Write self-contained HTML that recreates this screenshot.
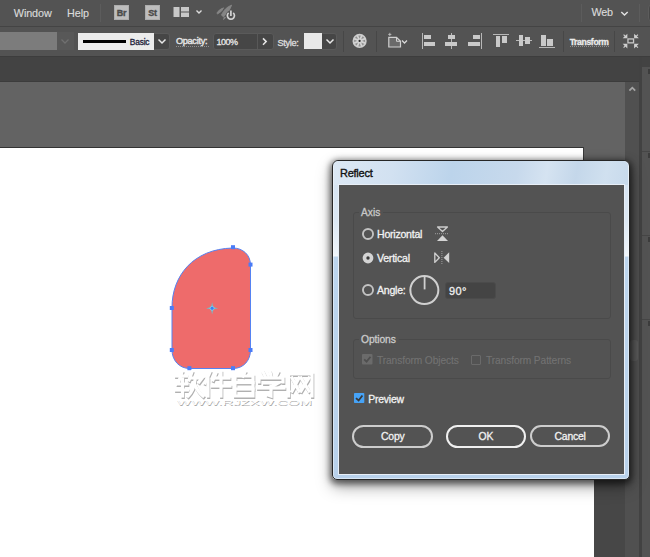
<!DOCTYPE html>
<html><head><meta charset="utf-8"><style>
html,body{margin:0;padding:0;}
body{width:650px;height:557px;overflow:hidden;position:relative;background:#535353;font-family:"Liberation Sans", sans-serif;}
body>div,body>svg{position:absolute;}
.t{white-space:nowrap;line-height:1;}
</style></head><body>
<div style="left:0px;top:0px;width:650px;height:25px;background:#535353"></div>
<div style="left:0px;top:26px;width:650px;height:1px;background:#444444"></div>
<div class="t" style="left:13.8px;top:8.06px;font-size:10.8px;color:#dadada;-webkit-text-stroke:0.15px #dadada;letter-spacing:-0.1px">Window</div>
<div class="t" style="left:66.9px;top:8.06px;font-size:10.8px;color:#dadada;-webkit-text-stroke:0.15px #dadada;">Help</div>
<div style="left:100px;top:4px;width:1px;height:18px;background:#5c5c5c"></div>
<div style="left:114px;top:5px;width:15px;height:15px;background:#bdbdbd;color:#4a4a4a;font:bold 9px/16px 'Liberation Sans', sans-serif;text-align:center;letter-spacing:-0.2px;box-shadow:inset 0 0 0 1px #adadad;-webkit-text-stroke:0.35px #4a4a4a">Br</div>
<div style="left:145px;top:5px;width:15px;height:15px;background:#bdbdbd;color:#4a4a4a;font:bold 9px/16px 'Liberation Sans', sans-serif;text-align:center;letter-spacing:-0.2px;box-shadow:inset 0 0 0 1px #adadad;-webkit-text-stroke:0.35px #4a4a4a">St</div>
<svg style="left:173px;top:6px" width="32" height="12" viewBox="0 0 32 12">
<rect x="0.5" y="1" width="6" height="10" fill="#c8c8c8"/>
<rect x="8" y="1" width="8" height="4.5" fill="#c8c8c8"/>
<rect x="8" y="6.5" width="8" height="4.5" fill="#c8c8c8"/>
<path d="M23.5 4.5 L26 7 L28.5 4.5" stroke="#dcdcdc" stroke-width="1.4" fill="none"/>
</svg>
<svg style="left:214px;top:2px" width="24" height="20" viewBox="0 0 24 20">
<path d="M2.8 11.2 Q5 7.2 9.6 5.8 Q8.2 9.8 3.6 11.9 Z" fill="#858585" stroke="#858585" stroke-width="0.8" stroke-linejoin="round"/>
<path d="M7.4 12.9 Q11 5.5 17.7 3.1 Q15.8 10 9.4 14.9 Z" fill="#858585" stroke="#858585" stroke-width="0.8" stroke-linejoin="round"/>
<path d="M9.6 17.6 L10.2 15 L11.8 15.4 Z" fill="#858585" stroke="#858585" stroke-width="0.8"/>
<circle cx="16.9" cy="13.8" r="5.2" fill="#535353"/>
<path d="M14.6 10.9 A3.55 3.55 0 1 0 19.2 10.9" stroke="#d4d4d4" stroke-width="1.7" fill="none"/>
<path d="M16.9 8.6 V14.1" stroke="#d4d4d4" stroke-width="1.7"/>
</svg>
<div style="left:581px;top:4px;width:1px;height:18px;background:#5c5c5c"></div>
<div class="t" style="left:591.5px;top:7.16px;font-size:10.8px;color:#dadada;-webkit-text-stroke:0.15px #dadada;letter-spacing:-0.2px">Web</div>
<svg style="left:620px;top:10px" width="9" height="7" viewBox="0 0 9 7"><path d="M1.3 2 L4.5 5 L7.7 2" stroke="#e0e0e0" stroke-width="1.5" fill="none"/></svg>
<div style="left:639px;top:4px;width:1px;height:18px;background:#5c5c5c"></div>
<div style="left:647.5px;top:4px;width:12px;height:18px;border:1px solid #5c5c5c;border-radius:4px;background:#474747;box-sizing:border-box"></div>
<div style="left:0px;top:27px;width:650px;height:29px;background:#535353"></div>
<div style="left:0px;top:56px;width:650px;height:1px;background:#3d3d3d"></div>
<div style="left:0px;top:32px;width:57px;height:18px;background:#7c7c7c"></div>
<div style="left:57px;top:32px;width:17px;height:18px;background:#585858"></div>
<svg style="left:60px;top:38px" width="10" height="7" viewBox="0 0 10 7"><path d="M1.5 1.5 L5 5 L8.5 1.5" stroke="#707070" stroke-width="1.3" fill="none"/></svg>
<div style="left:78px;top:33px;width:76px;height:17px;background:#ebebeb"></div>
<div style="left:83px;top:39.8px;width:42.5px;height:2.8px;background:#000"></div>
<div class="t" style="left:129.8px;top:38.19px;font-size:8.4px;color:#1c1c3a;-webkit-text-stroke:0.3px #1c1c3a;letter-spacing:-0.2px">Basic</div>
<div style="left:154px;top:32.5px;width:15.5px;height:17px;background:#464646;border:1px solid #5a5a5a;border-left:none;box-sizing:border-box;border-radius:0 3px 3px 0"></div>
<svg style="left:157px;top:38px" width="10" height="7" viewBox="0 0 10 7"><path d="M1.5 1.5 L5 5 L8.5 1.5" stroke="#e8e8e8" stroke-width="1.5" fill="none"/></svg>
<div class="t" style="left:175.9px;top:37.41px;font-size:9.2px;color:#e6e6e6;-webkit-text-stroke:0.4px #e6e6e6;letter-spacing:-0.3px">Opacity:</div>
<svg style="left:176px;top:46px" width="34" height="1"><line x1="0" y1="0.5" x2="34" y2="0.5" stroke="#909090" stroke-width="1" stroke-dasharray="1 1"/></svg>
<div style="left:212.5px;top:32.5px;width:61px;height:17px;background:#464646;border:1px solid #5a5a5a;box-sizing:border-box;border-radius:3px"></div>
<div style="left:257px;top:33px;width:1px;height:16px;background:#585858"></div>
<div class="t" style="left:216.5px;top:37.58px;font-size:9px;color:#e6e6e6;-webkit-text-stroke:0.3px #e6e6e6;letter-spacing:-0.5px">100%</div>
<svg style="left:261px;top:37px" width="7" height="10" viewBox="0 0 7 10"><path d="M2 1.4 L5.2 4.6 L2 7.8" stroke="#e8e8e8" stroke-width="1.5" fill="none"/></svg>
<div class="t" style="left:277.4px;top:38.51px;font-size:9.2px;color:#dcdcdc;-webkit-text-stroke:0.35px #dcdcdc;letter-spacing:-0.3px">Style:</div>
<div style="left:304.4px;top:33.4px;width:17.2px;height:16px;background:#e8e8e8"></div>
<div style="left:321.6px;top:32.5px;width:15.4px;height:17px;background:#464646;border:1px solid #5a5a5a;border-left:none;box-sizing:border-box;border-radius:0 3px 3px 0"></div>
<svg style="left:324.5px;top:38px" width="10" height="7" viewBox="0 0 10 7"><path d="M1.5 1.5 L5 5 L8.5 1.5" stroke="#e8e8e8" stroke-width="1.5" fill="none"/></svg>
<div style="left:343px;top:31px;width:1px;height:21px;background:#474747"></div>
<svg style="left:351px;top:32px" width="18" height="18" viewBox="0 0 18 18">
<circle cx="8.6" cy="8.9" r="7.1" fill="#cdcdcd"/>
<circle cx="8.6" cy="8.9" r="5.5" fill="#909090"/>
<g stroke="#d4d4d4" stroke-width="1.7" transform="rotate(22.5 8.6 8.9)">
<line x1="8.6" y1="3" x2="8.6" y2="14.8"/><line x1="2.7" y1="8.9" x2="14.5" y2="8.9"/>
<line x1="4.43" y1="4.73" x2="12.77" y2="13.07"/><line x1="12.77" y1="4.73" x2="4.43" y2="13.07"/>
</g>
<circle cx="8.6" cy="8.9" r="2.2" fill="#d4d4d4"/>
<circle cx="8.6" cy="8.9" r="1.1" fill="#2e2e2e"/>
</svg>
<div style="left:376px;top:31px;width:1px;height:21px;background:#474747"></div>
<svg style="left:384px;top:32px" width="26" height="18" viewBox="0 0 26 18">
<path d="M4.8 5.3 H12.5 L16.5 9.3 V15 H4.8 Z" fill="#6a6a6a" stroke="#d0d0d0" stroke-width="1.2"/>
<path d="M12.5 5.3 V9.3 H16.5" fill="none" stroke="#d0d0d0" stroke-width="1"/>
<path d="M5.8 0.8 V4 M4.2 2.4 H7.4" stroke="#c8c8c8" stroke-width="0.8"/>
<path d="M18 8.5 L20.5 11 L23 8.5" stroke="#d8d8d8" stroke-width="1.3" fill="none"/>
</svg>
<div style="left:422.3px;top:33.2px;width:1px;height:15.6px;background:#b8b8b8"></div>
<div style="left:424.2px;top:34.6px;width:6.8px;height:4.9px;background:#c9c9c9"></div>
<div style="left:424.2px;top:41.8px;width:11.1px;height:4.5px;background:#c9c9c9"></div>
<div style="left:451px;top:33.2px;width:1px;height:15.6px;background:#b8b8b8"></div>
<div style="left:447.6px;top:34.6px;width:7.4px;height:4.9px;background:#c9c9c9"></div>
<div style="left:445.2px;top:41.8px;width:12.3px;height:4.5px;background:#c9c9c9"></div>
<div style="left:481px;top:33.2px;width:1px;height:15.6px;background:#b8b8b8"></div>
<div style="left:472.8px;top:34.6px;width:7.4px;height:4.9px;background:#c9c9c9"></div>
<div style="left:468px;top:41.8px;width:12.3px;height:4.5px;background:#c9c9c9"></div>
<div style="left:493.4px;top:34px;width:15.6px;height:1px;background:#b8b8b8"></div>
<div style="left:496px;top:35.8px;width:4.4px;height:11.1px;background:#c9c9c9"></div>
<div style="left:502.2px;top:35.8px;width:5.2px;height:6.8px;background:#c9c9c9"></div>
<div style="left:516px;top:40px;width:15.8px;height:1px;background:#b8b8b8"></div>
<div style="left:518.8px;top:34.9px;width:4.1px;height:11.1px;background:#c9c9c9"></div>
<div style="left:525px;top:36.8px;width:5px;height:7.4px;background:#c9c9c9"></div>
<div style="left:538.5px;top:47.2px;width:16px;height:1px;background:#b8b8b8"></div>
<div style="left:541.4px;top:34.9px;width:4.2px;height:11.1px;background:#c9c9c9"></div>
<div style="left:547.2px;top:38.9px;width:5.5px;height:7.1px;background:#c9c9c9"></div>
<div style="left:563px;top:31px;width:1px;height:21px;background:#474747"></div>
<div class="t" style="left:569.7px;top:37.52px;font-size:8.6px;color:#ececec;-webkit-text-stroke:0.3px #ececec;font-weight:bold;letter-spacing:-0.35px">Transform</div>
<svg style="left:570px;top:46px" width="39" height="1"><line x1="0" y1="0.5" x2="39" y2="0.5" stroke="#8e8e8e" stroke-width="1" stroke-dasharray="1 1"/></svg>
<div style="left:614px;top:31px;width:1px;height:21px;background:#474747"></div>
<svg style="left:622px;top:33px" width="18" height="16" viewBox="0 0 18 16">
<rect x="5.95" y="5.95" width="5.6" height="3.9" fill="none" stroke="#c8c8c8" stroke-width="1.3"/>
<g fill="#d0d0d0" stroke="#d0d0d0" stroke-width="1.1">
<path d="M1.6 1.6 L3.6 3.6" /><path d="M4.8 4.8 L4.8 2 L2 4.8 Z"/>
<path d="M15.9 1.6 L13.9 3.6" /><path d="M12.7 4.8 L12.7 2 L15.5 4.8 Z"/>
<path d="M1.6 14.6 L3.6 12.6" /><path d="M4.8 11.4 L4.8 14.2 L2 11.4 Z"/>
<path d="M15.9 14.6 L13.9 12.6" /><path d="M12.7 11.4 L12.7 14.2 L15.5 11.4 Z"/>
</g></svg>
<div style="left:0px;top:57px;width:650px;height:25px;background:#434343"></div>
<div style="left:0px;top:81px;width:639px;height:1px;background:#3c3c3c"></div>
<div style="left:0px;top:82px;width:625px;height:475px;background:#636363"></div>
<div style="left:0px;top:147px;width:583px;height:410px;background:#fff"></div>
<div style="left:0px;top:147px;width:583px;height:1px;background:#333"></div>
<div style="left:583px;top:147px;width:1px;height:333px;background:#3a3a3a"></div>
<div style="left:583px;top:480px;width:11px;height:77px;background:#fff"></div>
<div style="left:594px;top:480px;width:31px;height:77px;background:#474747"></div>
<div style="left:625px;top:82px;width:14px;height:475px;background:#505050"></div>
<svg style="left:628px;top:86px" width="9" height="6" viewBox="0 0 9 6"><path d="M1.4 4.6 L4.3 1.7 L7.2 4.6" stroke="#a4a4a4" stroke-width="1.8" fill="none"/></svg>
<div style="left:630px;top:340px;width:8px;height:21px;background:#5a5a5a;border-radius:3px"></div>
<div style="left:639px;top:57px;width:3px;height:500px;background:#424242"></div>
<div style="left:642px;top:67px;width:8px;height:490px;background:#535353"></div>
<div style="left:642px;top:151px;width:8px;height:1px;background:#464646"></div>
<div style="left:642px;top:235px;width:8px;height:1px;background:#464646"></div>
<div style="left:642px;top:319px;width:8px;height:1px;background:#464646"></div>
<div style="left:648px;top:69px;width:2px;height:5px;background:#3c3c3c"></div>
<div style="left:648px;top:153px;width:2px;height:5px;background:#3c3c3c"></div>
<div style="left:648px;top:237px;width:2px;height:5px;background:#3c3c3c"></div>
<div style="left:648px;top:321px;width:2px;height:5px;background:#3c3c3c"></div>
<svg style="left:0;top:0" width="650" height="557" viewBox="0 0 650 557">
<path d="M232.7 248 C243 248 250.5 255 250.5 264.9 L250.5 350 C250.5 360 244 368.5 233 368.5 L189.6 368.5 C179 368.5 172 360 172 350 L172 307.5 C172 276 193 249 232.7 248 Z" fill="#ee6b6b" stroke="#5582f2" stroke-width="1"/>
<g fill="#4a7cf7">
<rect x="231" y="245.2" width="4" height="4"/><rect x="248.5" y="262.6" width="4" height="4"/>
<rect x="169.8" y="306" width="4" height="4"/><rect x="169.8" y="348" width="4" height="4"/>
<rect x="248.5" y="348" width="4" height="4"/><rect x="187.4" y="366.2" width="4" height="4"/>
<rect x="231" y="366.2" width="4" height="4"/>
</g>
<path d="M212.1 302.2 L213.1 307.3 L218.2 308.3 L213.1 309.3 L212.1 314.4 L211.1 309.3 L206 308.3 L211.1 307.3 Z" fill="#62c6d6"/>
<circle cx="212.1" cy="308.3" r="2" fill="#3d7ef2" stroke="#8fd8e8" stroke-width="0.7"/>
</svg>
<svg style="left:0;top:0" width="650" height="557" viewBox="0 0 650 557"><g stroke="#b0b0b0" stroke-width="3.2" fill="none" stroke-linecap="square"><g transform="translate(176.7,373.4)"><path d="M0 4H11"/><path d="M6 0L2 12H11"/><path d="M6.5 7V24"/><path d="M0 18H12"/><path d="M16 0L13 8"/><path d="M14 6H26L23 10"/><path d="M19 8Q18 18 12 24"/><path d="M19 13Q22 20 27 24"/></g><g transform="translate(204.7,373.4)"><path d="M6 0L1 11"/><path d="M4 7V24"/><path d="M12 1L9 8"/><path d="M10 6H25"/><path d="M8 14H26"/><path d="M17 0V24"/></g><g transform="translate(232.7,373.4)"><path d="M13 0L11 4"/><path d="M3 4H21V24H3Z"/><path d="M3 10.5H21"/><path d="M3 17H21"/></g><g transform="translate(258.7,373.4)"><path d="M5 0L7 4"/><path d="M12 0L13 4"/><path d="M20 0L18 4"/><path d="M1 10V6H25V10"/><path d="M6 11H20L13 15"/><path d="M0 16H26"/><path d="M13 14V24L10 23"/></g><g transform="translate(287.7,373.4)"><path d="M1.5 24V2H25V24"/><path d="M5 6L12 19M12 6L5 19"/><path d="M14 6L22 19M22 6L14 19"/></g></g><g stroke="#ffffff" stroke-width="3.2" fill="none" stroke-linecap="square"><g transform="translate(176,372)"><path d="M0 4H11"/><path d="M6 0L2 12H11"/><path d="M6.5 7V24"/><path d="M0 18H12"/><path d="M16 0L13 8"/><path d="M14 6H26L23 10"/><path d="M19 8Q18 18 12 24"/><path d="M19 13Q22 20 27 24"/></g><g transform="translate(204,372)"><path d="M6 0L1 11"/><path d="M4 7V24"/><path d="M12 1L9 8"/><path d="M10 6H25"/><path d="M8 14H26"/><path d="M17 0V24"/></g><g transform="translate(232,372)"><path d="M13 0L11 4"/><path d="M3 4H21V24H3Z"/><path d="M3 10.5H21"/><path d="M3 17H21"/></g><g transform="translate(258,372)"><path d="M5 0L7 4"/><path d="M12 0L13 4"/><path d="M20 0L18 4"/><path d="M1 10V6H25V10"/><path d="M6 11H20L13 15"/><path d="M0 16H26"/><path d="M13 14V24L10 23"/></g><g transform="translate(287,372)"><path d="M1.5 24V2H25V24"/><path d="M5 6L12 19M12 6L5 19"/><path d="M14 6L22 19M22 6L14 19"/></g></g><text x="177.6" y="406.4" fill="#a8a8a8" font-family="Liberation Sans" font-size="7.8" textLength="135" lengthAdjust="spacingAndGlyphs">WWW.RJZXW.COM</text><text x="177" y="405.2" fill="#ffffff" font-family="Liberation Sans" font-size="7.8" textLength="135" lengthAdjust="spacingAndGlyphs">WWW.RJZXW.COM</text></svg>
<div style="left:332px;top:160px;width:298px;height:320px;box-sizing:border-box;border:1px solid #262626;border-radius:6px 6px 5px 5px;background:linear-gradient(to bottom,#d3e2f1 0px,#dce8f4 60px,#eef4fa 92px,#f4f8fc 95px,#bcd5ee 96px,#b8d1eb 100%);box-shadow:inset 0 0 0 1px rgba(255,255,255,0.45),0 2px 6px 2px rgba(0,0,0,0.55),0 7px 16px 0 rgba(0,0,0,0.35)"></div>
<div style="left:334px;top:161px;width:294px;height:24px;border-radius:5px 5px 0 0;background:linear-gradient(100deg,#dce8f4 0%,#d2e1f1 20%,#bcd4eb 40%,#c7d9ec 62%,#d5e3f1 72%,#c4d7ea 82%,#d0e0ef 92%,#c8daec 100%)"></div>
<div style="left:339px;top:185px;width:285px;height:289px;background:#535353;outline:1px solid #e8eff7"></div>
<div class="t" style="left:340px;top:168.09px;font-size:11px;color:#111;-webkit-text-stroke:0.35px #111;letter-spacing:-0.25px">Reflect</div>
<div style="left:353px;top:211.6px;width:257.5px;height:107.4px;border:1px solid #4a4a4a;border-radius:3px;box-sizing:border-box"></div>
<div style="left:359px;top:205px;width:24px;height:10px;background:#535353"></div>
<div class="t" style="left:361px;top:207.97px;font-size:10.2px;color:#c8c8c8;-webkit-text-stroke:0.3px #c8c8c8;">Axis</div>
<svg style="left:360.8px;top:226.5px" width="14" height="14" viewBox="0 0 14 14"><circle cx="7" cy="7" r="5.05" fill="none" stroke="#c2c2c2" stroke-width="1.9"/></svg>
<svg style="left:360.8px;top:251px" width="14" height="14" viewBox="0 0 14 14"><circle cx="7" cy="7" r="5.4" fill="#d4d4d4"/><circle cx="7" cy="7" r="1.7" fill="#3a3a3a"/></svg>
<svg style="left:360.8px;top:283.4px" width="14" height="14" viewBox="0 0 14 14"><circle cx="7" cy="7" r="5.05" fill="none" stroke="#c2c2c2" stroke-width="1.9"/></svg>
<div class="t" style="left:377px;top:228.93px;font-size:10.6px;color:#f2f2f2;-webkit-text-stroke:0.3px #f2f2f2;letter-spacing:-0.25px">Horizontal</div>
<div class="t" style="left:377px;top:252.83px;font-size:10.6px;color:#f2f2f2;-webkit-text-stroke:0.3px #f2f2f2;letter-spacing:-0.25px">Vertical</div>
<div class="t" style="left:377px;top:285.03px;font-size:10.6px;color:#f2f2f2;-webkit-text-stroke:0.3px #f2f2f2;letter-spacing:-0.25px">Angle:</div>
<svg style="left:433px;top:224px" width="18" height="20" viewBox="0 0 18 20">
<path d="M4.6 3 H14.4 L9.5 7.6 Z" fill="none" stroke="#cdcdcd" stroke-width="1.35" stroke-linejoin="round"/>
<line x1="2" y1="9.7" x2="16" y2="9.7" stroke="#a8a8a8" stroke-width="0.9" stroke-dasharray="1 1"/>
<path d="M4 17 H15 L9.5 11.3 Z" fill="#d4d4d4"/>
</svg>
<svg style="left:432px;top:249px" width="20" height="18" viewBox="0 0 20 18">
<path d="M2.8 4 V13.4 L7.3 8.7 Z" fill="none" stroke="#cdcdcd" stroke-width="1.35" stroke-linejoin="round"/>
<line x1="9.9" y1="2" x2="9.9" y2="16" stroke="#a8a8a8" stroke-width="0.9" stroke-dasharray="1 1"/>
<path d="M17.2 3.3 V14 L11.6 8.65 Z" fill="#d4d4d4"/>
</svg>
<svg style="left:407px;top:273px" width="35" height="35" viewBox="0 0 35 35">
<circle cx="17.35" cy="17.1" r="14" fill="none" stroke="#d0d0d0" stroke-width="2"/>
<line x1="17.6" y1="3" x2="17.6" y2="16.4" stroke="#d0d0d0" stroke-width="1.8"/>
</svg>
<div style="left:444.6px;top:282.2px;width:51px;height:16.4px;background:#444;border:1px solid #4b4b4b;box-sizing:border-box;border-radius:3px"></div>
<div class="t" style="left:449.1px;top:286.09px;font-size:11px;color:#f0f0f0;-webkit-text-stroke:0.3px #f0f0f0;letter-spacing:0.3px">90°</div>
<div style="left:353px;top:339px;width:257.5px;height:40px;border:1px solid #4a4a4a;border-radius:3px;box-sizing:border-box"></div>
<div style="left:359px;top:332px;width:40px;height:10px;background:#535353"></div>
<div class="t" style="left:361px;top:335.08px;font-size:10.3px;color:#cacaca;-webkit-text-stroke:0.3px #cacaca;letter-spacing:-0.1px">Options</div>
<svg style="left:362px;top:354px" width="11" height="11" viewBox="0 0 11 11"><rect x="0" y="0" width="10.5" height="10.5" rx="1" fill="#6b6b6b"/><path d="M2.2 5.3 L4.6 7.6 L8.5 2.8" stroke="#4f4f4f" stroke-width="1.8" fill="none"/></svg>
<div class="t" style="left:377px;top:355.57px;font-size:10.2px;color:#727272;-webkit-text-stroke:0.15px #727272;letter-spacing:-0.1px">Transform Objects</div>
<div style="left:471px;top:354.6px;width:10px;height:10px;border:1px solid #6a6a6a;box-sizing:border-box;border-radius:1px"></div>
<div class="t" style="left:486px;top:355.57px;font-size:10.2px;color:#727272;-webkit-text-stroke:0.15px #727272;letter-spacing:-0.1px">Transform Patterns</div>
<svg style="left:353.6px;top:393.3px" width="11" height="11" viewBox="0 0 11 11"><rect x="0" y="0" width="10.3" height="10" rx="0.8" fill="#46a3f7"/><path d="M2 5.2 L4.6 7.5 L8.4 2.5" stroke="#383838" stroke-width="1.8" fill="none"/></svg>
<div class="t" style="left:368.3px;top:395.10px;font-size:10.4px;color:#f2f2f2;-webkit-text-stroke:0.3px #f2f2f2;letter-spacing:-0.2px">Preview</div>
<div style="left:352.4px;top:424.7px;width:80.6px;height:23.1px;border:2px solid #cdcdcd;border-radius:12px;box-sizing:border-box"></div>
<div class="t" style="left:381px;top:432.20px;font-size:10.4px;color:#f2f2f2;-webkit-text-stroke:0.3px #f2f2f2;letter-spacing:-0.2px">Copy</div>
<div style="left:445.5px;top:424.8px;width:80px;height:22.9px;border:2.3px solid #f0f0f0;border-radius:12px;box-sizing:border-box"></div>
<div class="t" style="left:478.5px;top:432.20px;font-size:10.4px;color:#f2f2f2;-webkit-text-stroke:0.3px #f2f2f2;letter-spacing:-0.2px">OK</div>
<div style="left:529.8px;top:424.8px;width:80px;height:22.7px;border:2px solid #cdcdcd;border-radius:12px;box-sizing:border-box"></div>
<div class="t" style="left:554.5px;top:432.20px;font-size:10.4px;color:#f2f2f2;-webkit-text-stroke:0.3px #f2f2f2;letter-spacing:-0.2px">Cancel</div>
</body></html>
